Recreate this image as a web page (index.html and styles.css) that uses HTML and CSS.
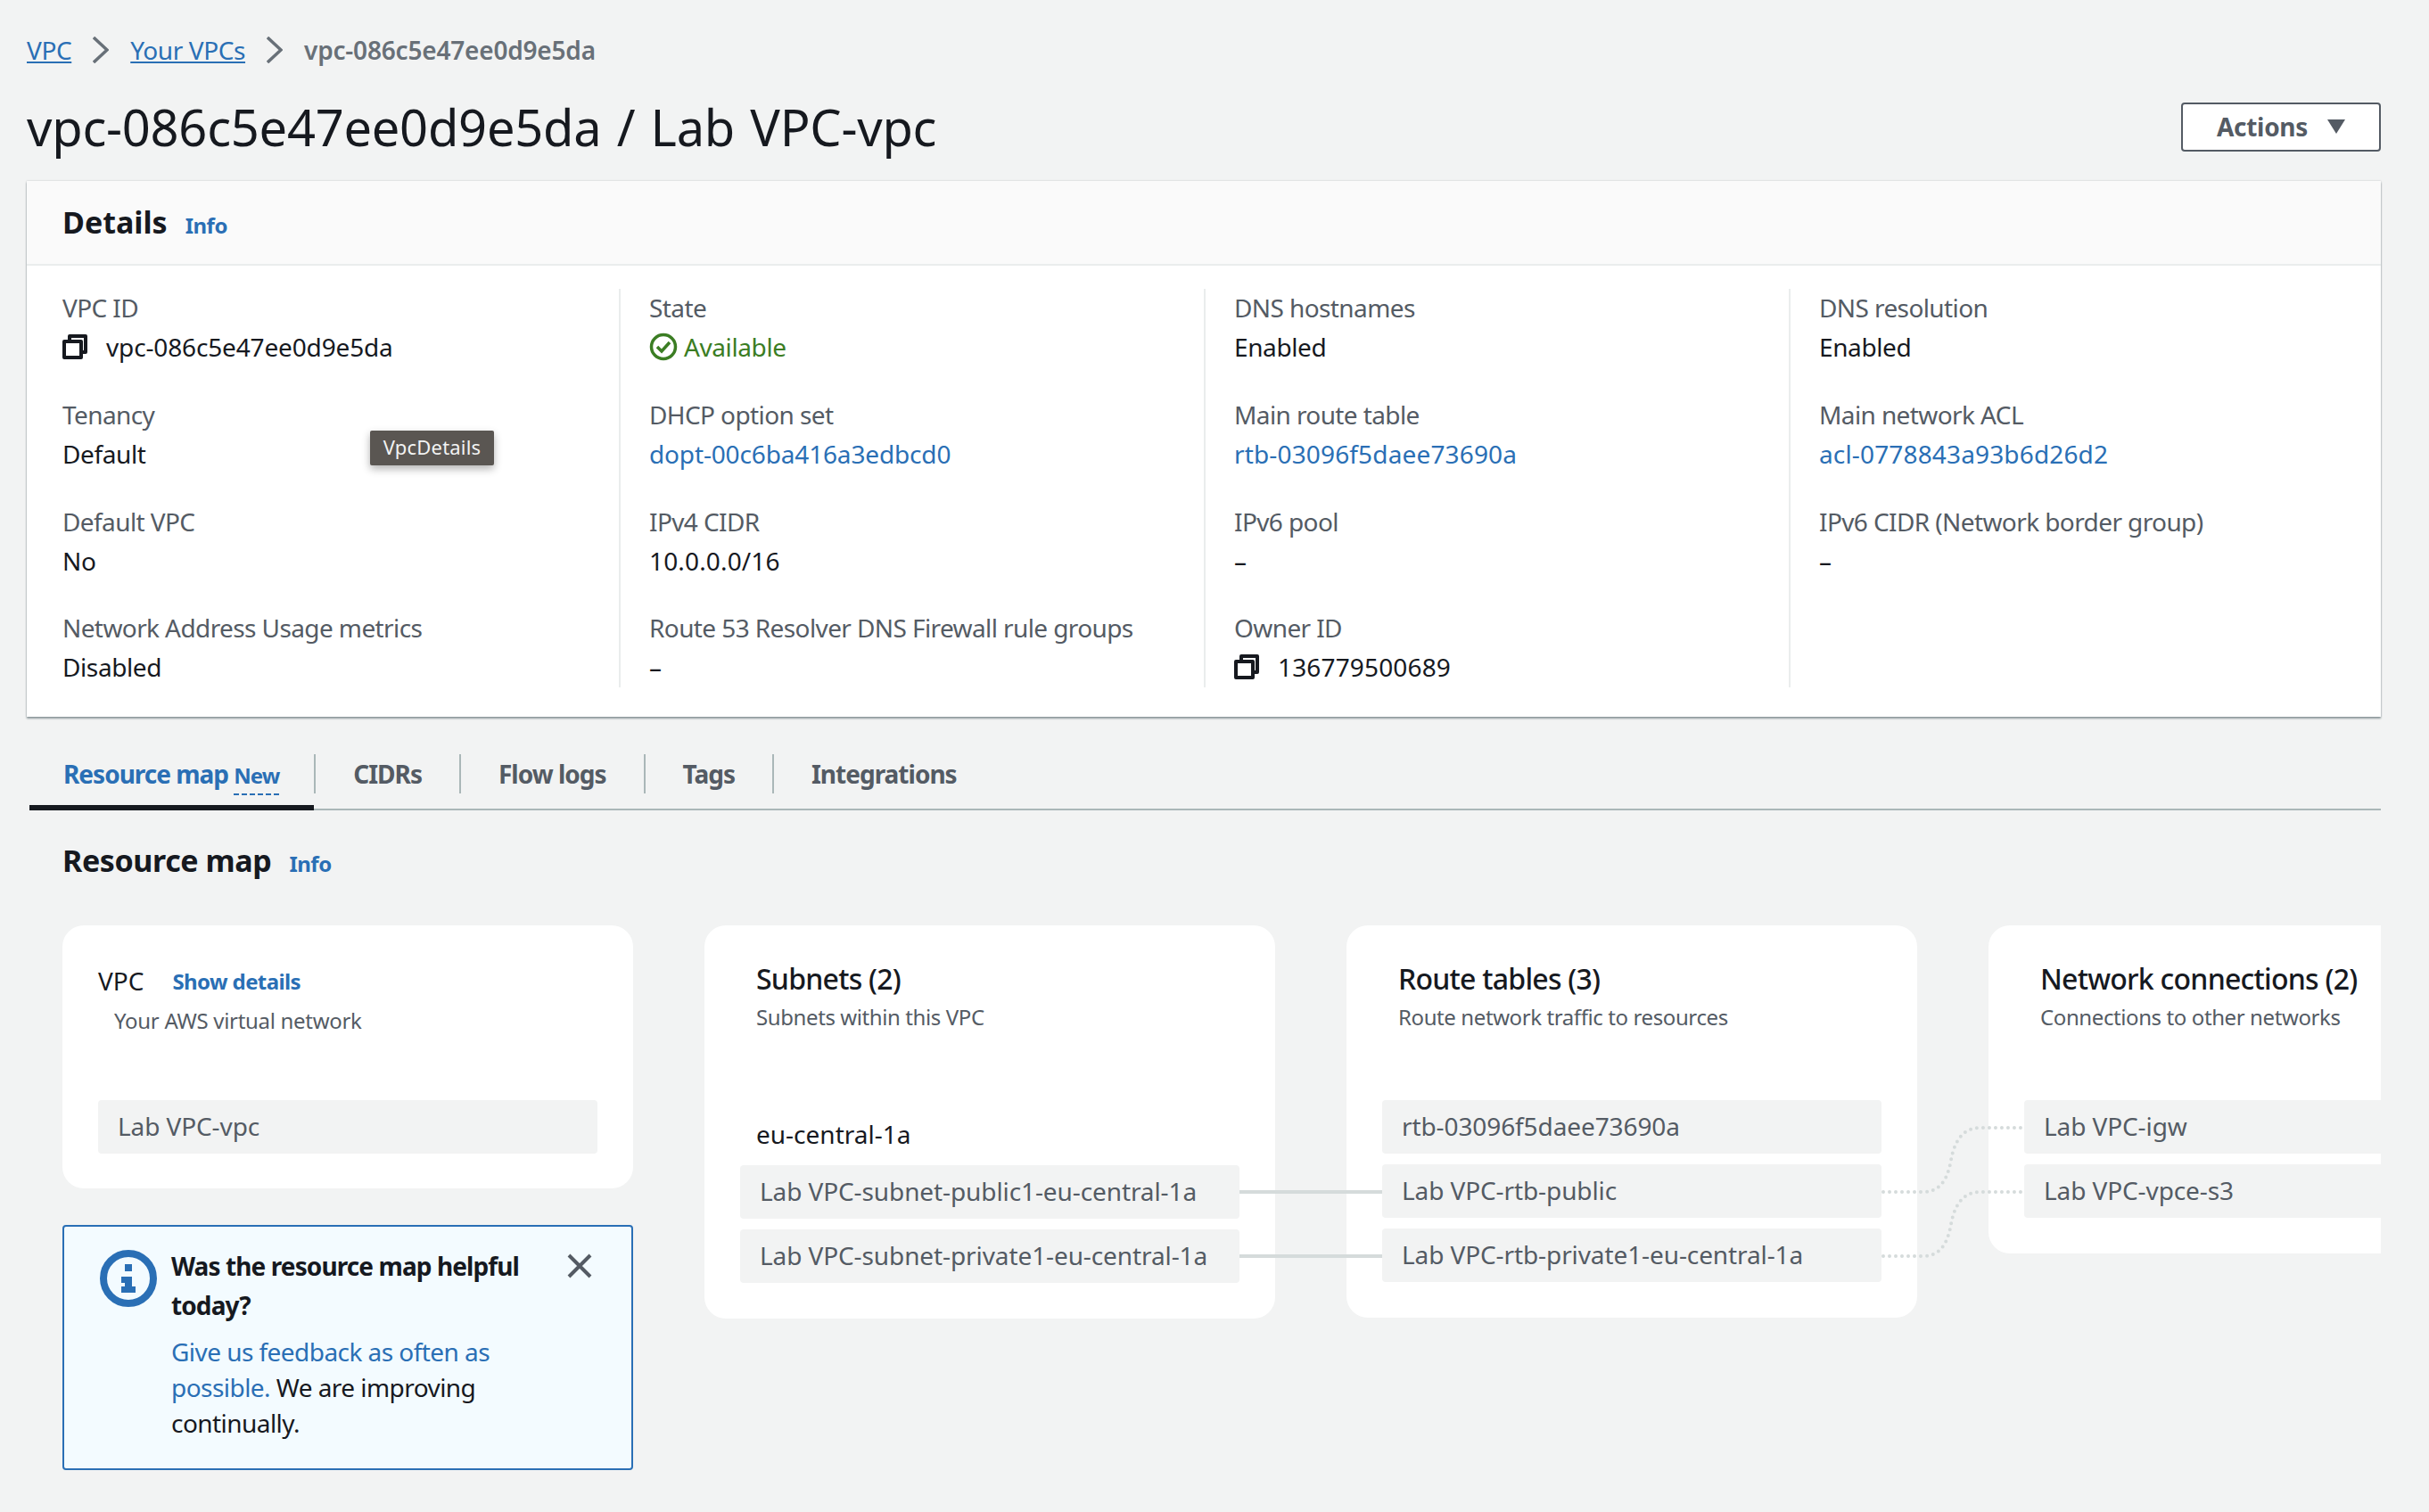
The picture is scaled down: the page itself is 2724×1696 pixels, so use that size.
FILE: index.html
```html
<!DOCTYPE html>
<html lang="en">
<head>
    <meta charset="UTF-8">
    <title>vpc-086c5e47ee0d9e5da / Lab VPC-vpc</title>
    <link rel="stylesheet" href="styles.css">
</head>
<body>
    <!-- Breadcrumbs -->
    <nav class="crumbs">
        <a href="#">VPC</a>
        <svg class="chevron" viewBox="0 0 18 30"><path d="M1 1l15 14L1 29"/></svg>
        <a href="#">Your VPCs</a>
        <svg class="chevron" viewBox="0 0 18 30"><path d="M1 1l15 14L1 29"/></svg>
        <span>vpc-086c5e47ee0d9e5da</span>
    </nav>

    <div class="title-row">
        <h1>vpc-086c5e47ee0d9e5da / Lab VPC-vpc</h1>
        <button class="actions">Actions <svg viewBox="0 0 20 16"><path d="M0 0h20L10 16z"/></svg></button>
    </div>

    <!-- Details card -->
    <section class="details">
        <header class="details-head">
            <h2>Details</h2>
            <a class="info" href="#">Info</a>
        </header>
        <div class="details-grid">
            <div class="col">
                <div class="field">
                    <div class="label">VPC ID</div>
                    <div class="value id">
                        <svg class="copy" viewBox="0 0 28 28"><path d="M8 8V2h18v18h-5"/><path d="M2 8h19v18H2z"/></svg>
                        vpc-086c5e47ee0d9e5da
                    </div>
                </div>
                <div class="field">
                    <div class="label">Tenancy</div>
                    <div class="value">Default</div>
                    <div class="tooltip">VpcDetails</div>
                </div>
                <div class="field">
                    <div class="label">Default VPC</div>
                    <div class="value">No</div>
                </div>
                <div class="field">
                    <div class="label">Network Address Usage metrics</div>
                    <div class="value">Disabled</div>
                </div>
            </div>
            <div class="col">
                <div class="field">
                    <div class="label">State</div>
                    <div class="value ok">
                        <svg class="check" viewBox="0 0 32 32"><circle cx="16" cy="16" r="13.5"/><path d="M9 16l5 5 9-10"/></svg>
                        Available
                    </div>
                </div>
                <div class="field">
                    <div class="label">DHCP option set</div>
                    <div class="value id"><a href="#">dopt-00c6ba416a3edbcd0</a></div>
                </div>
                <div class="field">
                    <div class="label">IPv4 CIDR</div>
                    <div class="value wide">10.0.0.0/16</div>
                </div>
                <div class="field">
                    <div class="label">Route 53 Resolver DNS Firewall rule groups</div>
                    <div class="value">–</div>
                </div>
            </div>
            <div class="col">
                <div class="field">
                    <div class="label">DNS hostnames</div>
                    <div class="value">Enabled</div>
                </div>
                <div class="field">
                    <div class="label">Main route table</div>
                    <div class="value wide"><a href="#">rtb-03096f5daee73690a</a></div>
                </div>
                <div class="field">
                    <div class="label">IPv6 pool</div>
                    <div class="value">–</div>
                </div>
                <div class="field">
                    <div class="label">Owner ID</div>
                    <div class="value wide">
                        <svg class="copy" viewBox="0 0 28 28"><path d="M8 8V2h18v18h-5"/><path d="M2 8h19v18H2z"/></svg>
                        136779500689
                    </div>
                </div>
            </div>
            <div class="col">
                <div class="field">
                    <div class="label">DNS resolution</div>
                    <div class="value">Enabled</div>
                </div>
                <div class="field">
                    <div class="label">Main network ACL</div>
                    <div class="value wide"><a href="#">acl-0778843a93b6d26d2</a></div>
                </div>
                <div class="field">
                    <div class="label">IPv6 CIDR (Network border group)</div>
                    <div class="value">–</div>
                </div>
            </div>
        </div>
    </section>

    <!-- Tabs -->
    <div class="tabs">
        <a class="tab active" href="#">Resource map <span class="new">New</span></a>
        <a class="tab" href="#">CIDRs</a>
        <a class="tab" href="#">Flow logs</a>
        <a class="tab" href="#">Tags</a>
        <a class="tab" href="#">Integrations</a>
    </div>

    <div class="map-head">
        <h2>Resource map</h2>
        <a class="info" href="#">Info</a>
    </div>

    <!-- Resource map -->
    <div class="map">
        <div class="map-col">
            <div class="card vpc-card">
                <div class="vpc-title"><span>VPC</span><a href="#">Show details</a></div>
                <p class="vpc-sub">Your AWS virtual network</p>
                <div class="rows"><div class="node">Lab VPC-vpc</div></div>
            </div>
            <div class="alert">
                <svg class="alert-icon" viewBox="0 0 64 64">
                    <circle cx="32" cy="32" r="28"/>
                    <path class="fill" d="M28 16h8v8h-8zM24 30h12v11h4v7H24v-7h4v-4h-4z"/>
                </svg>
                <div class="alert-text">
                    <strong>Was the resource map helpful today?</strong>
                    <p><a href="#">Give us feedback as often as</a></p>
                    <p><a href="#">possible.</a> <span>We are improving</span></p>
                    <p>continually.</p>
                </div>
                <svg class="close" viewBox="0 0 28 28"><path d="M2 2l24 24M26 2L2 26"/></svg>
            </div>
        </div>
        <div class="card">
            <h3>Subnets (2)</h3>
            <p class="sub">Subnets within this VPC</p>
            <div class="az">eu-central-1a</div>
            <div class="rows narrow">
                <div class="node">Lab VPC-subnet-public1-eu-central-1a</div>
                <div class="node">Lab VPC-subnet-private1-eu-central-1a</div>
            </div>
        </div>
        <div class="card">
            <h3>Route tables (3)</h3>
            <p class="sub">Route network traffic to resources</p>
            <div class="rows">
                <div class="node">rtb-03096f5daee73690a</div>
                <div class="node">Lab VPC-rtb-public</div>
                <div class="node">Lab VPC-rtb-private1-eu-central-1a</div>
            </div>
        </div>
        <div class="card">
            <h3>Network connections (2)</h3>
            <p class="sub">Connections to other networks</p>
            <div class="rows">
                <div class="node">Lab VPC-igw</div>
                <div class="node">Lab VPC-vpce-s3</div>
            </div>
        </div>

        <!-- Lines between the nodes, drawn over the cards -->
        <svg class="links" width="2600" height="657" viewBox="0 0 2600 657">
            <path class="solid" d="M1320 299h160M1320 371h160"/>
            <path class="dotted" d="M2042 299h44c20 0 28-14 32-36s14-36 32-36h48M2042 371h44c20 0 28-14 32-36s14-36 32-36h48"/>
        </svg>
    </div>
</body>
</html>
```

FILE: styles.css
```css
/* VPC details page */
body {
    font-family: "Noto Sans", Arial, sans-serif;
    font-size: 28px;
    color: #16191f;
    background-color: #f2f3f3;
    margin: 0;
    padding: 36px 54px 0 30px;
    height: 1660px;
    overflow: hidden;
}
a {
    color: #2a6fb5;
    text-decoration: none;
}
h1,
h2,
h3,
p {
    margin: 0;
}

/* Breadcrumbs */
.crumbs {
    display: flex;
    align-items: center;
    height: 40px;
    color: #687078;
    font-weight: 600;
    letter-spacing: -0.2px;
}
.crumbs a {
    font-weight: 400;
    letter-spacing: -0.4px;
    text-decoration: underline;
}
.chevron {
    width: 18px;
    height: 30px;
    margin: 0 24px;
}
.chevron path {
    fill: none;
    stroke: #687078;
    stroke-width: 3.5;
}

/* Title */
.title-row {
    display: flex;
    align-items: center;
    justify-content: space-between;
    height: 72px;
    margin-top: 30px;
}
h1 {
    font-size: 56px;
    font-weight: 400;
    line-height: 72px;
    letter-spacing: -0.25px;
    word-spacing: 3px;
}
.actions {
    display: flex;
    align-items: center;
    justify-content: center;
    gap: 22px;
    width: 224px;
    height: 55px;
    background-color: #fff;
    border: 2px solid #545b64;
    border-radius: 4px;
    color: #545b64;
    font-family: inherit;
    font-size: 28px;
    font-weight: 700;
    letter-spacing: -0.3px;
    padding: 0;
}
.actions svg {
    width: 20px;
    height: 16px;
    fill: #545b64;
}

/* Details card */
.details {
    margin-top: 25px;
    background-color: #fff;
    box-shadow: 0 2px 2px rgba(0, 28, 36, 0.4), 0 0 2px rgba(0, 28, 36, 0.2);
    height: 601px;
}
.details-head {
    display: flex;
    align-items: center;
    gap: 20px;
    height: 95px;
    padding: 0 0 1px 40px;
    box-sizing: border-box;
    background-color: #fafafa;
    border-bottom: 2px solid #eaeded;
}
h2 {
    font-size: 34px;
    font-weight: 700;
}
.info {
    font-size: 24px;
    font-weight: 700;
    letter-spacing: -0.5px;
    margin-top: 6px;
}
.details-grid {
    display: grid;
    grid-template-columns: 624px 656px 656px 1fr;
    padding: 26px 40px 0;
}
.col {
    height: 447px;
}
.col + .col {
    border-left: 2px solid #eaeded;
    padding-left: 32px;
}
.field {
    position: relative;
    height: 119.8px;
}
.label {
    color: #545b64;
    line-height: 42px;
    letter-spacing: -0.6px;
}
.value {
    display: flex;
    align-items: center;
    gap: 21px;
    line-height: 44px;
    margin-top: 1px;
    letter-spacing: -0.4px;
}
.id {
    letter-spacing: -0.15px;
}
.wide {
    letter-spacing: 0.15px;
}
.ok {
    color: #3b7d23;
    gap: 7px;
}
.copy {
    width: 28px;
    height: 28px;
}
.copy path {
    fill: none;
    stroke: #16191f;
    stroke-width: 4;
    stroke-linejoin: round;
}
.check {
    width: 32px;
    height: 32px;
}
.check circle,
.check path {
    fill: none;
    stroke: #3b7d23;
    stroke-width: 3.5;
}
.tooltip {
    position: absolute;
    left: 345px;
    top: 39px;
    width: 139px;
    height: 39px;
    line-height: 37px;
    text-align: center;
    font-size: 22px;
    letter-spacing: 0.2px;
    color: #f2f3f3;
    background-color: #5a5652;
    box-shadow: 0 4px 10px rgba(0, 0, 0, 0.3);
    border-radius: 2px;
}

/* Tabs */
.tabs {
    display: flex;
    margin: 42px 0 0 3px;
    height: 61px;
    border-bottom: 2px solid #aab7b8;
}
.tab {
    position: relative;
    height: 44px;
    line-height: 44px;
    padding: 0 42px;
    color: #545b64;
    font-weight: 700;
    letter-spacing: -1px;
    border-left: 2px solid #aab7b8;
}
.tab:first-child {
    border-left: 0;
    padding: 0 39px 0 38px;
}
.active {
    color: #2a6fb5;
}
.active::after {
    content: "";
    position: absolute;
    left: 0;
    right: 0;
    bottom: -19px;
    height: 6px;
    background-color: #16191f;
}
.new {
    font-size: 24px;
    letter-spacing: -1px;
    border-bottom: 2px dashed #2a6fb5;
    padding-bottom: 4px;
}

/* Resource map */
.map-head {
    display: flex;
    align-items: center;
    gap: 20px;
    height: 50px;
    margin: 31px 0 0 40px;
}
.map-head h2 {
    letter-spacing: -0.4px;
}
.map {
    position: relative;
    display: grid;
    grid-template-columns: repeat(4, 640px);
    column-gap: 80px;
    align-items: start;
    margin: 48px 0 0 40px;
    height: 657px;
    overflow: hidden;
}
.map-col {
    display: flex;
    flex-direction: column;
    gap: 41px;
}
.card {
    position: relative;
    background-color: #fff;
    border-radius: 24px;
    padding: 38px 58px 40px;
}
h3 {
    font-size: 32px;
    font-weight: 500;
    line-height: 44px;
    letter-spacing: -0.75px;
}
.sub {
    font-size: 24px;
    line-height: 34px;
    letter-spacing: -0.4px;
    color: #545b64;
    margin-top: 4px;
}
.az {
    line-height: 40px;
    margin-top: 94px;
}
.rows {
    display: flex;
    flex-direction: column;
    gap: 12px;
    margin: 76px -18px 0;
}
.az + .rows {
    margin: 15px 0 0 -18px;
}
.narrow {
    width: 560px;
}
.node {
    height: 60px;
    line-height: 58px;
    padding-left: 22px;
    background-color: #f2f3f3;
    border-radius: 4px;
    color: #545b64;
    letter-spacing: -0.1px;
    white-space: nowrap;
}
.vpc-card {
    height: 295px;
    box-sizing: border-box;
    padding: 40px;
}
.vpc-title {
    display: flex;
    align-items: center;
    gap: 32px;
    height: 44px;
}
.vpc-title a {
    font-size: 24px;
    font-weight: 700;
    letter-spacing: -0.6px;
}
.vpc-sub {
    font-size: 24px;
    line-height: 34px;
    letter-spacing: -0.3px;
    color: #545b64;
    margin: 6px 0 0 18px;
}
.vpc-card .rows {
    margin: 72px 0 0;
}

/* Feedback alert */
.alert {
    display: flex;
    box-sizing: border-box;
    height: 275px;
    padding: 26px 40px 0 40px;
    background-color: #f3fbff;
    border: 2px solid #2a6fb5;
    border-radius: 4px;
}
.alert-icon {
    flex: none;
    width: 64px;
    height: 64px;
    margin-right: 16px;
}
.alert-icon circle {
    fill: none;
    stroke: #2a6fb5;
    stroke-width: 8;
}
.alert-icon .fill {
    fill: #2a6fb5;
}
.alert-text {
    width: 432px;
    letter-spacing: -0.55px;
}
.alert-text strong {
    display: block;
    line-height: 44px;
    letter-spacing: -0.9px;
    margin-top: -4px;
    margin-bottom: 10px;
}
.alert-text p {
    line-height: 40px;
}
.close {
    flex: none;
    width: 28px;
    height: 28px;
    margin: 4px 0 0 12px;
}
.close path {
    fill: none;
    stroke: #545b64;
    stroke-width: 4;
}

/* Links between nodes */
.links {
    position: absolute;
    left: 0;
    top: 0;
    pointer-events: none;
}
.solid,
.dotted {
    fill: none;
    stroke: #d5dbdb;
    stroke-width: 4;
}
.dotted {
    stroke-linecap: round;
    stroke-dasharray: 0 7;
}
```
